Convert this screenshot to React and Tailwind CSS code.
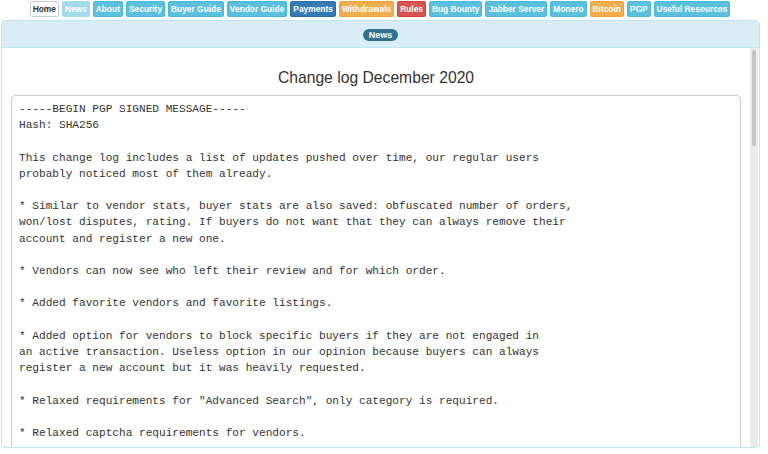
import React from "react";

const buttons = [
  ["Home", "bg-white text-[#333] border-[#ccc]"],
  ["News", "bg-[#a2dbeb] text-white border-[#a2dbeb]"],
  ["About", "bg-[#5bc0de] text-white border-[#46b8da]"],
  ["Security", "bg-[#5bc0de] text-white border-[#46b8da]"],
  ["Buyer Guide", "bg-[#5bc0de] text-white border-[#46b8da]"],
  ["Vendor Guide", "bg-[#5bc0de] text-white border-[#46b8da]"],
  ["Payments", "bg-[#337ab7] text-white border-[#2e6da4]"],
  ["Withdrawals", "bg-[#f0ad4e] text-white border-[#eea236]"],
  ["Rules", "bg-[#d9534f] text-white border-[#d43f3a]"],
  ["Bug Bounty", "bg-[#5bc0de] text-white border-[#46b8da]"],
  ["Jabber Server", "bg-[#5bc0de] text-white border-[#46b8da]"],
  ["Monero", "bg-[#5bc0de] text-white border-[#46b8da]"],
  ["Bitcoin", "bg-[#f0ad4e] text-white border-[#eea236]"],
  ["PGP", "bg-[#5bc0de] text-white border-[#46b8da]"],
  ["Useful Resources", "bg-[#5bc0de] text-white border-[#46b8da]"],
];

const text = `-----BEGIN PGP SIGNED MESSAGE-----
Hash: SHA256

This change log includes a list of updates pushed over time, our regular users
probably noticed most of them already.

* Similar to vendor stats, buyer stats are also saved: obfuscated number of orders,
won/lost disputes, rating. If buyers do not want that they can always remove their
account and register a new one.

* Vendors can now see who left their review and for which order.

* Added favorite vendors and favorite listings.

* Added option for vendors to block specific buyers if they are not engaged in
an active transaction. Useless option in our opinion because buyers can always
register a new account but it was heavily requested.

* Relaxed requirements for "Advanced Search", only category is required.

* Relaxed captcha requirements for vendors.

* Added more details to the order page.
`;

export default function App() {
  return (
    <div className="w-[760px] bg-white" style={{ fontFamily: '"Liberation Sans", Arial, sans-serif' }}>
      <div className="flex justify-center gap-[3px] pt-[1px] h-[20px]">
        {buttons.map(([label, cls]) => (
          <span
            key={label}
            className={`shrink-0 whitespace-nowrap h-[16px] px-[2px] border rounded-[2px] text-[8.4px] font-bold leading-[14px] flex items-center ${cls}`}
          >
            {label}
          </span>
        ))}
      </div>
      <div className="ml-[1px] h-[428px] border border-[#bce8f1] rounded-[4px] flex flex-col overflow-hidden">
        <div className="h-[27px] bg-[#d9edf7] border-b border-[#bce8f1] flex items-center justify-center">
          <span className="bg-[#31708f] text-white text-[9px] font-bold rounded-full px-[6px] h-[12px] leading-[12px] mt-[1px]">
            News
          </span>
        </div>
        <div className="flex-1 flex min-h-0">
          <div className="flex-1 overflow-hidden px-[9px]">
            <h3 className="text-center text-[15.7px] text-[#333] mt-[21px] mb-[8px] leading-[18px]">
              Change log December 2020
            </h3>
            <pre
              className="border border-[#ccc] rounded-[4px] bg-white text-[#333] text-[11.12px] leading-[16.2px] px-[7px] py-[5px] whitespace-pre"
              style={{ fontFamily: '"Liberation Mono", "Courier New", monospace' }}
            >
              {text}
            </pre>
          </div>
          <div className="w-[8px] mr-[1px] bg-[#ebebeb] pt-[2px] flex justify-center">
            <div className="w-[4px] h-[96px] bg-[#c6c6c6] rounded-full" />
          </div>
        </div>
      </div>
    </div>
  );
}
